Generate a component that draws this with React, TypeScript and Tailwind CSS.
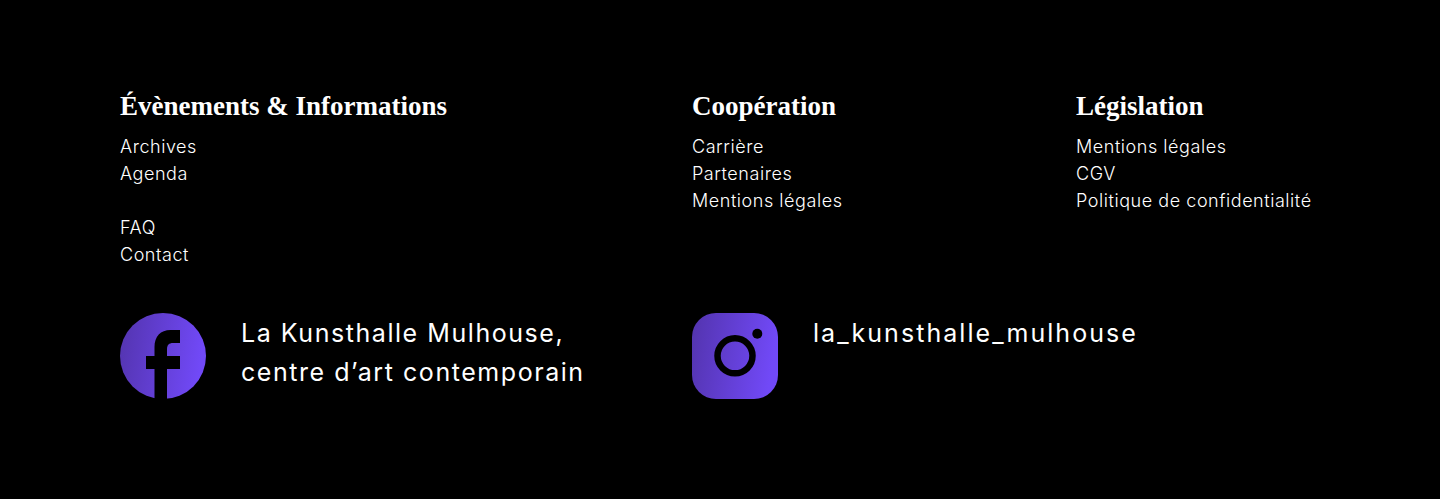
const columns = [
  { title: 'Évènements & Informations', links: ['Archives', 'Agenda', '', 'FAQ', 'Contact'] },
  { title: 'Coopération', links: ['Carrière', 'Partenaires', 'Mentions légales'] },
  { title: 'Législation', links: ['Mentions légales', 'CGV', 'Politique de confidentialité'] },
];

const FacebookIcon = () => (
  <svg width="86" height="86" viewBox="0 0 86 86" className="shrink-0">
    <defs>
      <linearGradient id="fb-grad" x1="0" y1="0" x2="1" y2="0.15">
        <stop offset="0" stopColor="#5334ae" />
        <stop offset="1" stopColor="#7149f7" />
      </linearGradient>
    </defs>
    <circle cx="43" cy="43" r="43" fill="url(#fb-grad)" />
    <path
      d="M34.500 86V56H26V43h8.500v-9C34.500 23.500 40.500 17 50.500 17H60v13h-7c-4 0-6 2-6 6v7h13v13H47v30z"
      fill="#000"
    />
  </svg>
);

const InstagramIcon = () => (
  <svg width="86" height="86" viewBox="0 0 86 86" className="shrink-0">
    <defs>
      <linearGradient id="ig-grad" x1="0" y1="0" x2="1" y2="0.15">
        <stop offset="0" stopColor="#5334ae" />
        <stop offset="1" stopColor="#7149f7" />
      </linearGradient>
    </defs>
    <rect width="86" height="86" rx="24" fill="url(#ig-grad)" />
    <circle cx="43" cy="42.800" r="17.500" fill="none" stroke="#000" strokeWidth="6.500" />
    <circle cx="65.300" cy="20.700" r="5" fill="#000" />
  </svg>
);

export default function App() {
  return (
    <div className="w-full h-[499px] bg-black text-white px-[120px] pt-[90px] font-['Inter',sans-serif]">
      <div className="grid grid-cols-[572px_384px_1fr]">
        {columns.map(col => (
          <div key={col.title}>
            <h3 className="font-['Liberation_Serif',serif] font-bold text-[27px] leading-[32px] mb-[11px]">
              {col.title}
            </h3>
            <ul className="text-[18px] leading-[27px] font-light tracking-[0.55px]">
              {col.links.map((link, i) => (
                <li key={i} className="h-[27px]">{link}</li>
              ))}
            </ul>
          </div>
        ))}
      </div>

      <div className="grid grid-cols-[572px_1fr] mt-[45px]">
        <div className="flex items-start gap-[35px]">
          <FacebookIcon />
          <p className="text-[25px] leading-[39px] tracking-[1.55px] pt-[1px]">
            La Kunsthalle Mulhouse,
            <br />
            centre d’art contemporain
          </p>
        </div>
        <div className="flex items-start gap-[35px]">
          <InstagramIcon />
          <p className="text-[25px] leading-[39px] tracking-[2.05px] pt-[1px]">la_kunsthalle_mulhouse</p>
        </div>
      </div>
    </div>
  );
}
